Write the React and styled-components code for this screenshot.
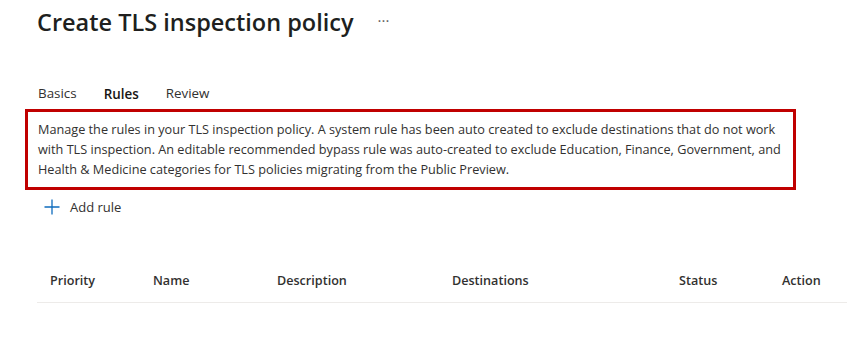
import React from "react";
import styled, { createGlobalStyle } from "styled-components";

const tabs = [
  { label: "Basics", active: false },
  { label: "Rules", active: true },
  { label: "Review", active: false },
];

const columns = [
  { label: "Priority", width: 103 },
  { label: "Name", width: 124 },
  { label: "Description", width: 175 },
  { label: "Destinations", width: 227 },
  { label: "Status", width: 103 },
  { label: "Action", width: 60 },
];

function PlusIcon() {
  return (
    <svg width="16" height="16" viewBox="0 0 16 16">
      <path d="M8 0.5v15M0.5 8h15" stroke="#0f6cbd" strokeWidth="1.3" fill="none" />
    </svg>
  );
}

export default function App() {
  return (
    <>
      <GlobalStyle />
      <Page>
        <Header>
          <Title>Create TLS inspection policy</Title>
          <More>···</More>
        </Header>
        <Tabs>
          {tabs.map((t) => (
            <Tab key={t.label} $active={t.active}>
              {t.label}
            </Tab>
          ))}
        </Tabs>
        <Notice>
          Manage the rules in your TLS inspection policy. A system rule has been auto created to exclude destinations that do not work
          <br />
          with TLS inspection. An editable recommended bypass rule was auto-created to exclude Education, Finance, Government, and
          <br />
          Health &amp; Medicine categories for TLS policies migrating from the Public Preview.
        </Notice>
        <AddButton>
          <PlusIcon />
          Add rule
        </AddButton>
        <Table>
          {columns.map((c) => (
            <HeadCell key={c.label} $w={c.width}>
              {c.label}
            </HeadCell>
          ))}
        </Table>
      </Page>
    </>
  );
}

const GlobalStyle = createGlobalStyle`
  html, body {
    margin: 0;
    background: #ffffff;
  }
  body {
    font-family: "Open Sans", "Noto Sans", Arial, sans-serif;
    color: #323130;
  }
`;

const Page = styled.div`
  width: 847px;
  height: 358px;
  overflow: hidden;
  padding-left: 37px;
  box-sizing: border-box;
`;

const Header = styled.div`
  display: flex;
  align-items: center;
  height: 44px;
  gap: 24px;
`;

const Title = styled.h1`
  margin: 0;
  font-size: 23.5px;
  font-weight: 600;
  color: #201f1e;
`;

const More = styled.span`
  font-size: 15px;
  color: #605e5c;
  margin-top: -4px;
`;

const Tabs = styled.div`
  display: flex;
  gap: 27px;
  margin-top: 34px;
  padding-left: 1px;
  height: 30px;
  align-items: center;
`;

const Tab = styled.div`
  font-size: 13.4px;
  font-weight: ${(p) => (p.$active ? 600 : 400)};
  color: ${(p) => (p.$active ? "#161514" : "#323130")};
  margin-top: ${(p) => (p.$active ? "2px" : "0")};
`;

const Notice = styled.div`
  margin-left: -12px;
  margin-top: 1px;
  width: 771px;
  box-sizing: border-box;
  border: 3px solid #c00000;
  padding: 7px 10px 8px;
  font-size: 12.7px;
  line-height: 20px;
  color: #323130;
  white-space: nowrap;
`;

const AddButton = styled.div`
  display: flex;
  align-items: center;
  gap: 10px;
  margin-top: 8px;
  padding-left: 7px;
  font-size: 13px;
  color: #323130;
`;

const Table = styled.div`
  display: flex;
  margin-top: 42px;
  height: 44px;
  align-items: center;
  border-bottom: 1px solid #edebe9;
  padding-left: 13px;
`;

const HeadCell = styled.div`
  width: ${(p) => p.$w}px;
  flex: none;
  font-size: 12.6px;
  font-weight: 600;
  color: #323130;
`;
